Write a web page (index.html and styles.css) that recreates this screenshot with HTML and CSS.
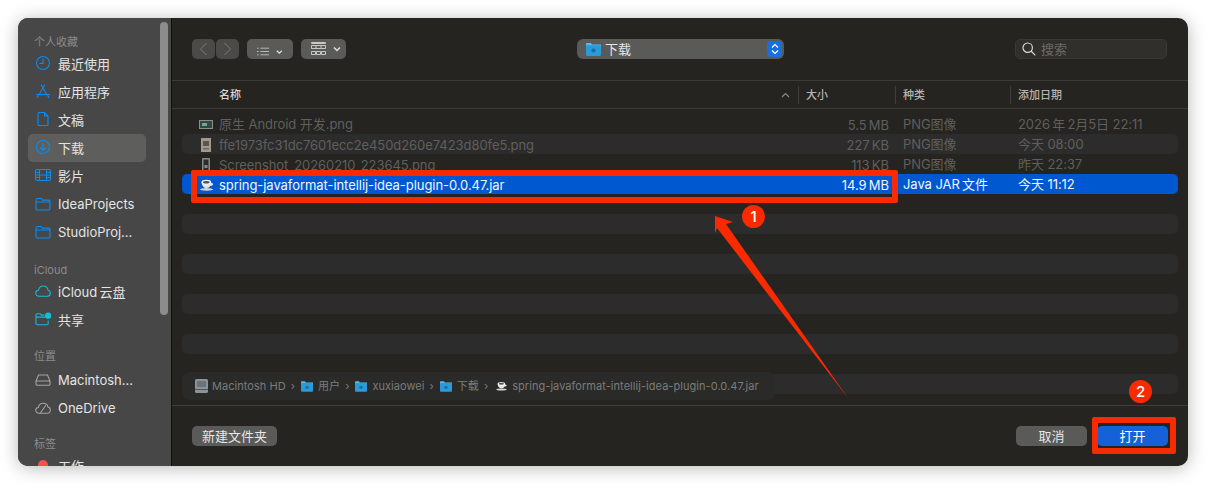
FILE: index.html
```html
<!DOCTYPE html>
<html lang="zh-CN">
<head>
    <meta charset="UTF-8">
    <title>打开文件</title>
    <link rel="stylesheet" href="styles.css">
</head>
<body>
    <!-- shared icons -->
    <svg class="defs" width="0" height="0">
        <symbol id="i-folder" viewBox="0 0 16 14"><path d="M1 3.2C1 2 1.6 1.5 2.6 1.5H6l1.4 1.6h6c1 0 1.6.6 1.6 1.6v6.6c0 1-.6 1.7-1.6 1.7H2.6c-1 0-1.6-.7-1.6-1.7zM1 5h14"/></symbol>
        <symbol id="i-blue-folder" viewBox="0 0 14 12"><path fill="#57b9ec" d="M0 1.2C0 .5.4 0 1.1 0h3.4l1.2 1.3H14V4H0z"/><rect y="2" width="14" height="10" rx="1" fill="#2a9ad9"/><circle cx="7" cy="7" r="2" fill="#1b6fa8"/></symbol>
        <symbol id="i-cup" viewBox="0 0 14 12"><path fill="#e8e8e8" d="M2 3.5h9.500v.6c1.300 0 2.100.5 2 1.300-.1.800-1 1.300-2.500 1.300C10.200 8 8.700 9 6.800 9 4.200 9 2.400 7 2 3.500z"/><ellipse cx="6.800" cy="3.200" rx="4.800" ry="2.400" fill="#f4f4f4"/><ellipse cx="6.800" cy="3.200" rx="3.300" ry="1.300" fill="#5a5048"/><ellipse cx="7" cy="10.400" rx="6.500" ry="1.300" fill="#d6d6d6"/></symbol>
        <symbol id="i-chev" viewBox="0 0 8 6"><path d="M1 1.500 4 4.500 7 1.500" fill="none" stroke="currentColor" stroke-width="1.500"/></symbol>
    </svg>

    <div class="window">
        <!-- Sidebar -->
        <aside class="sidebar">
            <div class="side-label first">个人收藏</div>
            <div class="side-item han"><svg class="side-icon" viewBox="0 0 16 16"><circle cx="8" cy="8" r="6.500"/><path d="M8 3.500V8.500H4.500"/></svg>最近使用</div>
            <div class="side-item han"><svg class="side-icon" viewBox="0 0 16 16"><path d="M9.800 1.500 4 12M6 1.500 12 12M1 11.500h14M3.500 12 2 15M12.500 12l1.500 3"/></svg>应用程序</div>
            <div class="side-item han"><svg class="side-icon" viewBox="0 0 16 16"><path d="M3 2.500c0-.6.400-1 1-1h5.500L13 5v8.500c0 .6-.4 1-1 1H4c-.6 0-1-.4-1-1zM9.500 1.500V5H13"/></svg>文稿</div>
            <div class="side-item han selected"><svg class="side-icon" viewBox="0 0 16 16"><circle cx="8" cy="8" r="6.500"/><path d="M8 4v7.500M5 8.500l3 3 3-3"/></svg>下载</div>
            <div class="side-item han"><svg class="side-icon" viewBox="0 0 16 16"><rect x=".5" y="2.500" width="15" height="11" rx="1.500"/><path d="M4.500 2.500v11M11.500 2.500v11M4.500 8h7M.5 5.500h4M.5 8h4M.5 10.500h4M11.500 5.500h4M11.500 8h4M11.500 10.500h4"/></svg>影片</div>
            <div class="side-item"><svg class="side-icon"><use href="#i-folder"/></svg>IdeaProjects</div>
            <div class="side-item"><svg class="side-icon"><use href="#i-folder"/></svg>StudioProj...</div>

            <div class="side-label wide">iCloud</div>
            <div class="side-item han"><svg class="side-icon cyan" viewBox="0 0 17 14"><path d="M4.200 12.500C2.200 12.500.8 11 .8 9.300c0-1.700 1.300-3 2.900-3.100C4.300 3.500 6.300 1.800 8.800 1.800c2.700 0 4.700 2 5 4.300 1.500.3 2.500 1.600 2.500 3.200 0 1.800-1.400 3.200-3.200 3.200z"/></svg>iCloud&#8201;云盘</div>
            <div class="side-item han"><svg class="side-icon cyan" viewBox="0 0 17 14"><path d="M11 13H2.200C1.500 13 1 12.500 1 11.700V2.800C1 2 1.500 1.500 2.200 1.500h3.300l1.300 1.400H10M1 5h10M14 8.500v3.300c0 .7-.5 1.200-1.200 1.200H10"/><circle cx="14" cy="3.500" r="2.800" fill="#14bdd6"/></svg>共享</div>

            <div class="side-label near">位置</div>
            <div class="side-item"><svg class="side-icon gray" viewBox="0 0 16 14"><path d="M3.500 2h9L15 8v3c0 .8-.5 1.300-1.300 1.300H2.300C1.500 12.300 1 11.800 1 11V8zM1 8h14"/></svg>Macintosh...</div>
            <div class="side-item"><svg class="side-icon gray" viewBox="0 0 17 14"><path d="M4 12.500C2.200 12.500.8 11.200.8 9.500c0-1.600 1.200-2.800 2.700-3C4 4 6.200 2 8.800 2c2.600 0 4.500 1.800 5 4 1.500.2 2.500 1.500 2.500 3.200 0 1.800-1.400 3.300-3.200 3.300zM5.500 12.500 11.500 4"/></svg>OneDrive</div>

            <div class="side-label">标签</div>
            <div class="side-item han"><span class="tag-dot"></span>工作</div>

            <div class="side-scroll"></div>
        </aside>

        <!-- Main panel -->
        <main class="panel">
            <div class="toolbar">
                <div class="tool-group">
                    <div class="tool-btn nav"><svg width="9" height="14" viewBox="0 0 9 14"><path d="M7.500 1 1.500 7l6 6"/></svg></div>
                    <div class="tool-btn nav next"><svg width="9" height="14" viewBox="0 0 9 14"><path d="M1.500 1l6 6-6 6"/></svg></div>
                    <div class="tool-btn view list">
                        <svg width="15" height="11" viewBox="0 0 15 11"><path d="M4 1.500h11M4 5.500h11M4 9.500h11M0 1.500h2M0 5.500h2M0 9.500h2"/></svg>
                        <svg class="chev"><use href="#i-chev"/></svg>
                    </div>
                    <div class="tool-btn view grid">
                        <svg width="15" height="14" viewBox="0 0 15 14"><path d="M.5.500h14v1H.5zM.5 3.500h14v3H.5zM5 3.500v3M10 3.500v3M.5 9.500h4v3h-4zM5.500 9.500h4v3h-4zM10.500 9.500h4v3h-4z"/></svg>
                        <svg class="chev"><use href="#i-chev"/></svg>
                    </div>
                </div>
                <div class="path-popup">
                    <svg class="folder-big"><use href="#i-blue-folder"/></svg>
                    <span class="han">下载</span>
                    <div class="stepper"><svg width="8" height="12" viewBox="0 0 8 12"><path d="M1 4.500 4 1.500l3 3M1 7.500l3 3 3-3"/></svg></div>
                </div>
                <div class="search">
                    <svg width="14" height="14" viewBox="0 0 14 14"><circle cx="5.700" cy="5.700" r="4.700"/><path d="M9 9l4.300 4.300"/></svg>
                    <span class="han">搜索</span>
                </div>
            </div>

            <div class="head-row">
                <div class="head-cell name">名称<svg class="sort" width="9" height="6" viewBox="0 0 9 6"><path d="M1 5 4.500 1.500 8 5"/></svg></div>
                <div class="head-cell size">大小</div>
                <div class="head-cell kind">种类</div>
                <div class="head-cell date">添加日期</div>
            </div>

            <div class="list">
                <div class="row dim">
                    <span class="file-icon"><svg width="14" height="9" viewBox="0 0 14 9"><rect width="14" height="9" fill="#8a8f8c"/><rect x="1" y="1" width="12" height="7" fill="#2f4a42"/><rect x="3" y="3" width="5" height="3" fill="#7aa294"/></svg></span>
                    <span class="han">原生 Android 开发.png</span><span class="size-cell">5.5&#8201;MB</span><span class="kind-cell han">PNG图像</span><span class="han">2026&#8201;年&#8201;2月5日 22:11</span>
                </div>
                <div class="row dim stripe">
                    <span class="file-icon"><svg width="10" height="14" viewBox="0 0 10 14"><rect width="10" height="14" fill="#a09a8c"/><rect x="2" y="3" width="6" height="5" fill="#5c5648"/><rect x="2" y="10" width="6" height="1.500" fill="#6e6a5e"/></svg></span>
                    <span>ffe1973fc31dc7601ecc2e450d260e7423d80fe5.png</span><span class="size-cell">227&#8201;KB</span><span class="kind-cell han">PNG图像</span><span class="han">今天 08:00</span>
                </div>
                <div class="row dim">
                    <span class="file-icon"><svg width="8" height="14" viewBox="0 0 8 14"><rect width="8" height="14" rx="1" fill="#8a8a8a"/><rect x="1.500" y="1.500" width="5" height="11" fill="#2c2c2c"/><rect x="2.500" y="7" width="3" height="3" fill="#8a8a8a"/></svg></span>
                    <span>Screenshot_20260210_223645.png</span><span class="size-cell">113&#8201;KB</span><span class="kind-cell han">PNG图像</span><span class="han">昨天 22:37</span>
                </div>
                <div class="row picked">
                    <span class="file-icon"><svg width="15" height="12"><use href="#i-cup"/></svg></span>
                    <span>spring-javaformat-intellij-idea-plugin-0.0.47.jar</span><span class="size-cell">14.9&#8201;MB</span><span class="kind-cell han">Java JAR&#8201;文件</span><span class="han">今天 11:12</span>
                </div>
                <div class="row"></div>
                <div class="row stripe"></div>
                <div class="row"></div>
                <div class="row stripe"></div>
                <div class="row"></div>
                <div class="row stripe"></div>
                <div class="row"></div>
                <div class="row stripe"></div>
                <div class="row"></div>
                <div class="row stripe"></div>

                <div class="crumbs">
                    <svg class="crumb-disk" width="13" height="14" viewBox="0 0 13 14"><rect width="13" height="14" rx="1.500" fill="#8b9299"/><rect x="2" y="2" width="9" height="6" fill="#6b7278"/><rect y="10" width="13" height="1" fill="#555"/></svg>
                    <span>Macintosh HD</span><i>›</i>
                    <svg class="crumb-folder"><use href="#i-blue-folder"/></svg>
                    <span class="han">用户</span><i>›</i>
                    <svg class="crumb-folder"><use href="#i-blue-folder"/></svg>
                    <span>xuxiaowei</span><i>›</i>
                    <svg class="crumb-folder"><use href="#i-blue-folder"/></svg>
                    <span class="han">下载</span><i>›</i>
                    <svg class="crumb-cup"><use href="#i-cup"/></svg>
                    <span>spring-javaformat-intellij-idea-plugin-0.0.47.jar</span>
                </div>
            </div>

            <div class="footer">
                <button class="btn new-folder">新建文件夹</button>
                <button class="btn cancel">取消</button>
                <button class="btn open">打开</button>
            </div>
        </main>
    </div>

    <!-- Red annotations drawn on top of the screenshot -->
    <div class="mark mark-row"></div>
    <div class="mark mark-open"></div>
    <svg class="arrow" width="1206" height="484" viewBox="0 0 1206 484"><polygon points="715,216 733,222 726,224 848,398 717,228 715,233"/></svg>
    <div class="badge badge-one">1</div>
    <div class="badge badge-two">2</div>
</body>
</html>
```

FILE: styles.css
```css
/* Basic Styling */
* {
    box-sizing: border-box;
}

body {
    margin: 0;
    padding: 18px;
    height: 484px;
    overflow: hidden;
    position: relative;
    background-color: #fff;
    font-family: Inter, "Noto Sans CJK SC", sans-serif;
    font-size: 13px;
    color: #e2e2e2;
}

.defs {
    position: absolute;
}

/* CJK glyphs sit a pixel low next to Inter */
.han {
    margin-bottom: 2px;
}

.window {
    display: flex;
    width: 1170px;
    height: 448px;
    border-radius: 10px;
    overflow: hidden;
    background-color: #252420;
    box-shadow: 0 2px 18px rgba(0, 0, 0, 0.28);
}

/* Sidebar */
.sidebar {
    position: relative;
    flex: 0 0 154px;
    padding: 0 25px 0 10px;
    overflow: hidden;
    background-color: #474747;
    border-right: 1px solid #111;
}

.side-label {
    height: 16px;
    line-height: 16px;
    margin-top: 14px;
    padding-left: 6px;
    font-size: 11px;
    color: #8b8b8b;
}

.side-label.first { margin-top: 16px; }
.side-label.wide { margin-top: 16px; }
.side-label.near { margin-bottom: 2px; }

.side-item {
    display: flex;
    align-items: center;
    gap: 7px;
    height: 28px;
    padding-left: 7px;
    border-radius: 5px;
    white-space: nowrap;
    color: #e4e4e4;
}

.side-item.han {
    margin-bottom: 0;
    padding-bottom: 2px;
}

.side-item.selected {
    background-color: #5e5e5c;
}

.side-icon {
    flex: none;
    width: 16px;
    height: 16px;
    fill: none;
    stroke: #0a8cf0;
    stroke-width: 1.1;
    color: #0a8cf0;
}

.side-icon.cyan { stroke: #14bdd6; }
.side-icon.gray { stroke: #a4a4a4; }

.tag-dot {
    width: 10px;
    height: 10px;
    margin: 0 3px;
    border-radius: 50%;
    background-color: #f4504c;
}

.side-scroll {
    position: absolute;
    top: 4px;
    right: 3px;
    width: 8px;
    height: 293px;
    border-radius: 4px;
    background-color: #8c8c8c;
}

/* Main panel */
.panel {
    flex: 1;
    display: flex;
    flex-direction: column;
    min-width: 0;
}

.toolbar {
    display: flex;
    justify-content: space-between;
    align-items: center;
    height: 63px;
    padding: 0 21px 0 20px;
    border-bottom: 1px solid #3b3a37;
}

.tool-group {
    display: flex;
    width: 154px;
}

.tool-btn {
    display: flex;
    align-items: center;
    height: 20px;
    border-radius: 5px;
    background-color: #5a5a58;
}

.tool-btn svg {
    fill: none;
    stroke: #c8c8c8;
    stroke-width: 1;
}

.tool-btn.nav {
    justify-content: center;
    width: 23px;
    background-color: #4a4a48;
}

.tool-btn.nav svg { stroke: #7c7c7c; }
.tool-btn.next { margin-left: 1px; }

.tool-btn.view {
    gap: 7px;
    padding-left: 10px;
}

.tool-btn.list { width: 46px; margin-left: 8px; }
.tool-btn.grid { width: 45px; margin-left: 8px; }

.tool-btn .chev {
    width: 8px;
    height: 6px;
    color: #e0e0e0;
    stroke: none;
}

.path-popup {
    display: flex;
    align-items: center;
    width: 207px;
    height: 20px;
    padding: 0 2px 0 9px;
    border-radius: 6px;
    background-color: #5a5a58;
    color: #e6e6e6;
}

.folder-big {
    width: 15px;
    height: 13px;
    margin-right: 4px;
}

.stepper {
    display: flex;
    align-items: center;
    justify-content: center;
    width: 15px;
    height: 16px;
    margin-left: auto;
    border-radius: 4px;
    background-color: #1a6fe0;
}

.stepper svg {
    fill: none;
    stroke: #fff;
    stroke-width: 1.2;
}

.search {
    display: flex;
    align-items: center;
    gap: 5px;
    width: 152px;
    height: 20px;
    padding-left: 6px;
    border-radius: 5px;
    border: 1px solid #3a3936;
    background-color: #302f2b;
    color: #6c6b67;
}

.search svg {
    fill: none;
    stroke: #dadada;
    stroke-width: 1.2;
}

/* Column headers */
.head-row {
    display: grid;
    grid-template-columns: 627px 97px 115px 1fr;
    align-items: center;
    height: 28px;
    border-bottom: 1px solid #3b3a37;
    font-size: 11px;
    font-weight: 500;
    color: #b4b4b2;
}

.head-cell {
    height: 18px;
    line-height: 18px;
    padding-left: 7px;
    border-right: 1px solid #3f3e3b;
}

.head-cell.name {
    display: flex;
    align-items: center;
    justify-content: space-between;
    padding: 0 8px 0 47px;
    color: #d8d8d6;
}

.head-cell.date { border-right: none; }

.sort {
    fill: none;
    stroke: #8a8a88;
    stroke-width: 1.1;
}

/* File list */
.list {
    position: relative;
    flex: 1;
    min-height: 0;
    padding: 5px 10px 0;
    overflow: hidden;
}

.row {
    display: grid;
    grid-template-columns: 37px 590px 80px 129px 1fr;
    align-items: center;
    height: 20px;
    white-space: nowrap;
    letter-spacing: -0.06px;
}

.row.stripe {
    border-radius: 5px;
    background-color: #2c2c2c;
}

.row.dim { color: #5f5f5e; }

.row.picked {
    border-radius: 5px;
    background-color: #0058d0;
    color: #f2f6fc;
}

.file-icon {
    display: flex;
    justify-content: center;
    padding-left: 11px;
}

.size-cell { text-align: right; }
.kind-cell { padding-left: 14px; }

.crumbs {
    position: absolute;
    left: 10px;
    top: 263px;
    display: flex;
    align-items: center;
    width: 593px;
    height: 28px;
    padding-left: 13px;
    border-radius: 8px;
    background-color: #2a2a28;
    font-size: 11px;
    letter-spacing: 0.05px;
    white-space: nowrap;
    color: #7c7c7a;
}

.crumbs i {
    margin: 0 6px 0 5px;
    font-style: normal;
}

.crumb-disk { margin-right: 4px; }

.crumb-folder {
    width: 12px;
    height: 11px;
    margin-right: 5px;
}

.crumb-cup {
    width: 11px;
    height: 10px;
    margin: 0 5px 0 2px;
}

/* Footer buttons */
.footer {
    display: flex;
    align-items: center;
    flex: 0 0 61px;
    padding: 0 20px 0 20px;
    border-top: 1px solid #3f3e3b;
}

.btn {
    height: 20px;
    padding: 0 0 2px;
    border: none;
    border-radius: 5px;
    font-family: inherit;
    font-size: 13px;
    color: #e6e6e6;
    background-color: #5a5a58;
}

.new-folder { width: 85px; }
.cancel { width: 71px; margin-left: auto; }

.open {
    width: 71px;
    margin-left: 10px;
    background-color: #1561d8;
    color: #fff;
}

/* Annotations */
.mark {
    position: absolute;
    border: 6px solid #fa2a00;
    border-radius: 2px;
}

.mark-row {
    left: 191px;
    top: 170px;
    width: 707px;
    height: 33px;
}

.mark-open {
    left: 1092px;
    top: 417px;
    width: 84px;
    height: 37px;
}

.arrow {
    position: absolute;
    left: 0;
    top: 0;
    fill: #fa2a00;
}

.badge {
    position: absolute;
    width: 23px;
    height: 23px;
    line-height: 23px;
    border-radius: 50%;
    text-align: center;
    font-size: 15px;
    font-weight: 500;
    color: #fff;
    background-color: #fa2a00;
}

.badge-one { left: 742px; top: 205px; }
.badge-two { left: 1129px; top: 380px; }
```
